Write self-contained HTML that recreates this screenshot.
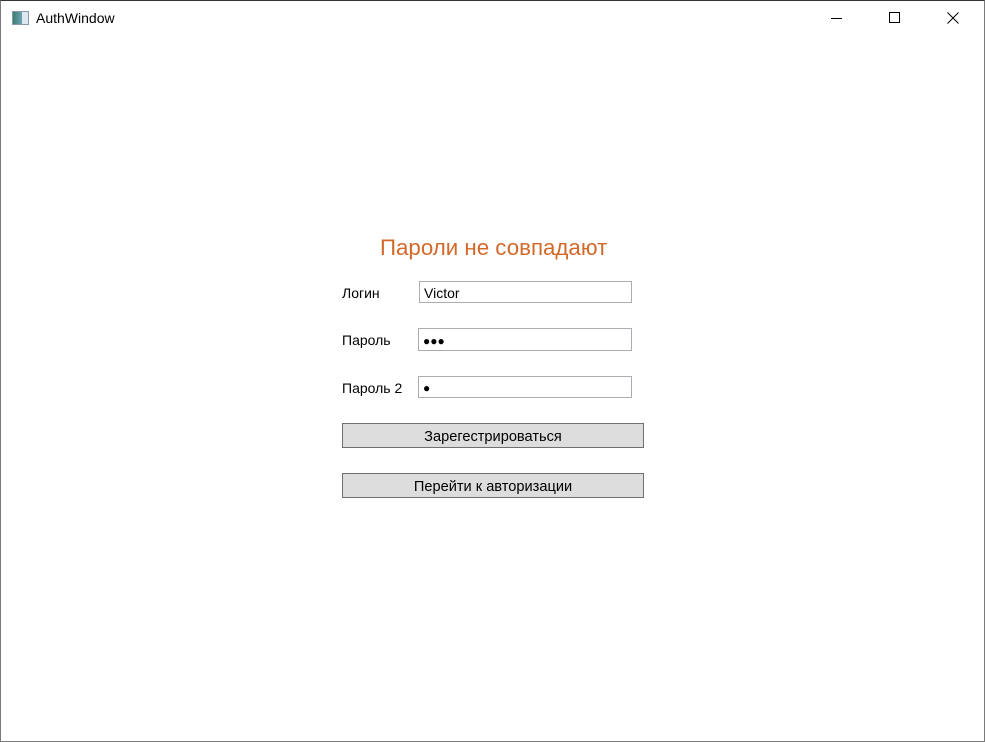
<!DOCTYPE html>
<html><head><meta charset="utf-8"><style>
*{margin:0;padding:0;box-sizing:border-box}
body{width:985px;height:742px;background:#fff;font-family:"Liberation Sans",sans-serif;position:relative;overflow:hidden}
.win{position:absolute;left:0;top:0;width:985px;height:742px;border:1px solid #7a7a7a;border-top-color:#333}
.t{position:absolute;white-space:nowrap;color:#000}
.box{position:absolute;border:1px solid #abadb3;background:#fff;font-size:14px;padding-left:4px;line-height:22px}
.btn{position:absolute;left:342px;width:302px;height:25px;background:#dddddd;border:1px solid #707070;font-size:14.6px;text-align:center;line-height:26px}
</style></head><body>
<div class="win"></div>
<div style="position:absolute;left:12px;top:11px;width:17px;height:14px;border:1px solid #8a9aa8;background:linear-gradient(90deg,#3c7f6d 0,#6fa3b8 60%,#dfe8ee 60%)"></div>
<div class="t" style="left:36px;top:10px;font-size:14px">AuthWindow</div>
<div style="position:absolute;left:831px;top:18px;width:11px;height:1px;background:#000"></div>
<div style="position:absolute;left:889px;top:12px;width:11px;height:11px;border:1px solid #000"></div>
<svg style="position:absolute;left:947px;top:12px" width="12" height="12"><path d="M0.5 0.5L11.5 11.5M11.5 0.5L0.5 11.5" stroke="#000" stroke-width="1"/></svg>
<div class="t" style="left:380px;top:235px;font-size:22.3px;color:#d2692a">Пароли не совпадают</div>
<div class="t" style="left:342px;top:285px;font-size:14px">Логин</div>
<div class="box" style="left:419px;top:281px;width:213px;height:22px">Victor</div>
<div class="t" style="left:342px;top:332px;font-size:14px">Пароль</div>
<div class="box" style="left:418px;top:328px;width:214px;height:23px;font-size:12px;line-height:24px">●●●</div>
<div class="t" style="left:342px;top:380px;font-size:14px">Пароль 2</div>
<div class="box" style="left:418px;top:376px;width:214px;height:22px;font-size:12px;line-height:23px">●</div>
<div class="btn" style="top:423px">Зарегестрироваться</div>
<div class="btn" style="top:473px">Перейти к авторизации</div>
</body></html>
